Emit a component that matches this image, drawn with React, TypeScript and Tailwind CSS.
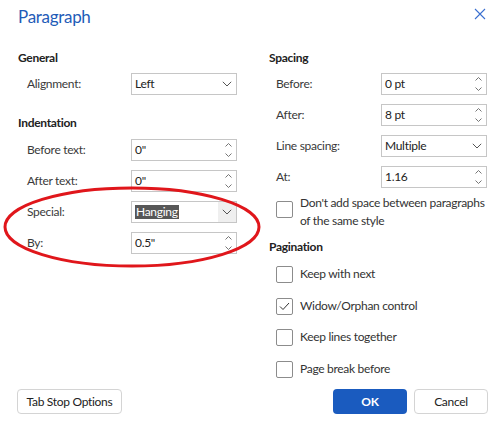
import React from "react";

const font = { fontFamily: 'Lato, "Open Sans", sans-serif' };

const Spinner = () => (
  <div className="flex flex-col items-center justify-between h-full py-[3px] pr-[4px]">
    <svg width="7" height="4" viewBox="0 0 7 4">
      <path d="M0.5 3.5 L3.5 0.5 L6.5 3.5" fill="none" stroke="#666" strokeWidth="0.9" />
    </svg>
    <svg width="7" height="4" viewBox="0 0 7 4">
      <path d="M0.5 0.5 L3.5 3.5 L6.5 0.5" fill="none" stroke="#666" strokeWidth="0.9" />
    </svg>
  </div>
);

const Chevron = () => (
  <svg width="10" height="6" viewBox="0 0 10 6">
    <path d="M0.8 0.8 L5 5 L9.2 0.8" fill="none" stroke="#555" strokeWidth="1" />
  </svg>
);

const NumberBox = ({ value }: { value: string }) => (
  <div className="w-[106px] h-[22px] border border-[#c6c6c6] flex items-center justify-between">
    <span className="pl-[3px] text-[12px] text-[#222]">{value}</span>
    <Spinner />
  </div>
);

const SelectBox = ({ value, highlight = false }: { value: string; highlight?: boolean }) => (
  <div className="w-[106px] h-[22px] border border-[#c6c6c6] flex items-center justify-between">
    {highlight ? (
      <span className="ml-[3px] px-[1px] bg-[#575757] text-white text-[12px] leading-[14px]">{value}</span>
    ) : (
      <span className="pl-[3px] text-[12px] text-[#222]">{value}</span>
    )}
    <div className={`h-full w-[18px] flex items-center justify-center ${highlight ? "bg-[#efefef]" : ""}`}>
      <Chevron />
    </div>
  </div>
);

const Row = ({ label, children, className = "" }: any) => (
  <div className={`flex items-center h-[22px] ${className}`}>
    <span className="w-[104px] pl-[9px] text-[12px] text-[#3a3a3a] box-content">{label}</span>
    {children}
  </div>
);

const RowR = ({ label, children, className = "" }: any) => (
  <div className={`flex items-center h-[22px] ${className}`}>
    <span className="w-[105px] pl-[7px] text-[12px] text-[#3a3a3a] box-content">{label}</span>
    {children}
  </div>
);

const Checkbox = ({ checked = false }: { checked?: boolean }) => (
  <div className="w-[17px] h-[17px] border border-[#8c8c8c] rounded-[2px] flex items-center justify-center shrink-0">
    {checked && (
      <svg width="11" height="9" viewBox="0 0 11 9">
        <path d="M1 4.5 L4 7.5 L10 1" fill="none" stroke="#333" strokeWidth="1" />
      </svg>
    )}
  </div>
);

const CheckRow = ({ label, checked, className = "" }: any) => (
  <div className={`flex items-center h-[18px] pl-[7px] gap-[7px] ${className}`}>
    <Checkbox checked={checked} />
    <span className="text-[12px] text-[#333] whitespace-nowrap">{label}</span>
  </div>
);

export default function App() {
  return (
    <div
      className="relative w-[494px] h-[424px] bg-white flex flex-col overflow-hidden tracking-[-0.3px]"
      style={font}
    >
      {/* header */}
      <div className="flex justify-between items-start pl-[18px] pr-[8px] pt-[5px]">
        <h1 className="text-[17px] leading-[24px] text-[#1f5cb8]">Paragraph</h1>
        <svg width="12" height="12" viewBox="0 0 12 12" className="mt-[3px]">
          <path d="M1 1 L11 11 M11 1 L1 11" stroke="#3a6fd0" strokeWidth="1.1" />
        </svg>
      </div>

      {/* body */}
      <div className="flex pl-[18px] pt-[21px]">
        <div className="w-[219px] flex flex-col">
          <h2 className="h-[16px] leading-[16px] text-[12px] font-bold text-[#222]">General</h2>
          <Row label="Alignment:" className="mt-[7px]">
            <SelectBox value="Left" />
          </Row>
          <h2 className="mt-[20px] h-[16px] leading-[16px] text-[12px] font-bold text-[#222]">Indentation</h2>
          <Row label="Before text:" className="mt-[8px]">
            <NumberBox value={'0"'} />
          </Row>
          <Row label="After text:" className="mt-[9px]">
            <NumberBox value={'0"'} />
          </Row>
          <Row label="Special:" className="mt-[9px]">
            <SelectBox value="Hanging" highlight />
          </Row>
          <Row label="By:" className="mt-[9px]">
            <NumberBox value={'0.5"'} />
          </Row>
        </div>

        <div className="ml-[32px] w-[218px] flex flex-col">
          <h2 className="h-[16px] leading-[16px] text-[12px] font-bold text-[#222]">Spacing</h2>
          <RowR label="Before:" className="mt-[7px]">
            <NumberBox value="0 pt" />
          </RowR>
          <RowR label="After:" className="mt-[9px]">
            <NumberBox value="8 pt" />
          </RowR>
          <RowR label="Line spacing:" className="mt-[9px]">
            <SelectBox value="Multiple" />
          </RowR>
          <RowR label="At:" className="mt-[9px]">
            <NumberBox value="1.16" />
          </RowR>
          <div className="flex items-start pl-[7px] gap-[7px] mt-[6px]">
            <div className="mt-[7px]">
              <Checkbox />
            </div>
            <span className="text-[12px] leading-[18px] text-[#333] whitespace-nowrap">
              Don't add space between paragraphs
              <br />
              of the same style
            </span>
          </div>
          <h2 className="mt-[9px] h-[16px] leading-[16px] text-[12px] font-bold text-[#222]">Pagination</h2>
          <CheckRow label="Keep with next" className="mt-[10px]" />
          <CheckRow label="Widow/Orphan control" checked className="mt-[14px]" />
          <CheckRow label="Keep lines together" className="mt-[13px]" />
          <CheckRow label="Page break before" className="mt-[14px]" />
        </div>
      </div>

      {/* footer */}
      <div className="mt-auto flex items-center pb-[10px] pl-[17px] pr-[6px]">
        <button className="h-[25px] w-[105px] border border-[#d4d4d4] rounded-[4px] text-[12px] text-[#222]">
          Tab Stop Options
        </button>
        <button className="ml-auto h-[25px] w-[74px] rounded-[4px] bg-[#1a5bbf] text-white text-[12px] font-bold">
          OK
        </button>
        <button className="ml-[7px] h-[25px] w-[74px] border border-[#d4d4d4] rounded-[4px] text-[12px] text-[#222]">
          Cancel
        </button>
      </div>

      {/* red annotation */}
      <svg className="absolute inset-0 pointer-events-none" width="494" height="424">
        <ellipse cx="132" cy="227" rx="127" ry="39" fill="none" stroke="#e0161b" strokeWidth="3" />
      </svg>
    </div>
  );
}
